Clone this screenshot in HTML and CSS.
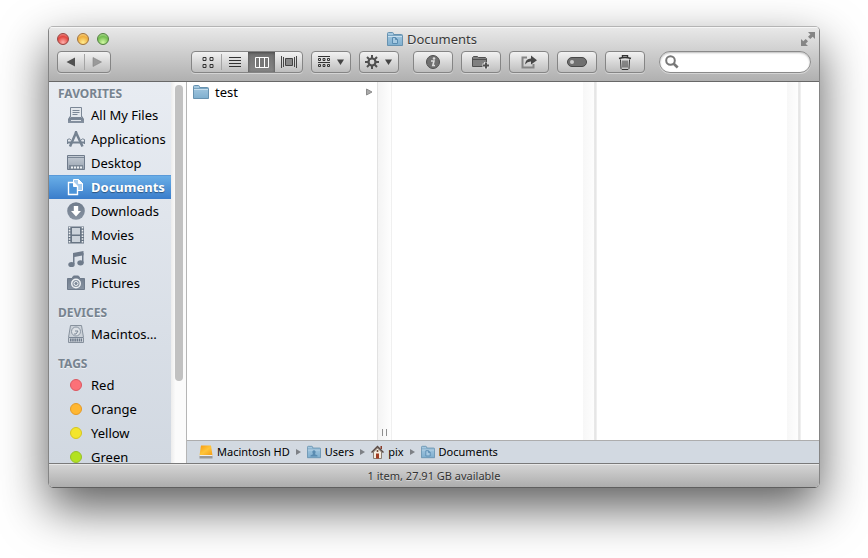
FILE: index.html
```html
<!DOCTYPE html>
<html lang="en">
<head>
<meta charset="utf-8">
<title>Documents</title>
<link rel="stylesheet" href="styles.css">
</head>
<body>
<svg class="defs" width="0" height="0" aria-hidden="true">
  <defs>
    <linearGradient id="folderFill" x1="0" y1="0" x2="0" y2="1"><stop offset="0" stop-color="#a9cbe2"/><stop offset="1" stop-color="#7fafcf"/></linearGradient>
    <linearGradient id="driveFill" x1="0" y1="0" x2="1" y2="1"><stop offset="0" stop-color="#f79a10"/><stop offset=".5" stop-color="#ffc53a"/><stop offset="1" stop-color="#f39a12"/></linearGradient>
    <linearGradient id="slate" x1="0" y1="0" x2="0" y2="1"><stop offset="0" stop-color="#6f7b8b"/><stop offset="1" stop-color="#8793a2"/></linearGradient>
    <linearGradient id="screen" x1="0" y1="0" x2="0" y2="1"><stop offset="0" stop-color="#c5ccd5"/><stop offset="1" stop-color="#98a3b0"/></linearGradient>
    <symbol id="folder" viewBox="0 0 16 16">
      <path d="M.5 14.500V2.500q0-1 1-1h4q.7 0 1 1v1h8q1 0 1 1v10z" fill="url(#folderFill)" stroke="#6792b0"/>
      <path d="M1 5.500h14" stroke="#c8dfee"/><path d="M1 4.500h14" stroke="#7aa5c2"/>
    </symbol>
    <symbol id="folder-doc" viewBox="0 0 16 16">
      <use href="#folder"/><path d="M5.500 6.500h3l2 2v4h-5zM8.500 6.500v2h2" fill="#a7cae2" stroke="#5a8cb1"/>
    </symbol>
    <symbol id="folder-user" viewBox="0 0 16 16">
      <use href="#folder"/><path d="M8 6a2 2 0 0 1 1.500 3.200L9.200 10.500l2.800 1.500v1H4v-1l2.800-1.500-.3-1.300A2 2 0 0 1 8 6z" fill="#5a8cb1"/>
    </symbol>
  </defs>
</svg>

<main class="window">
  <header class="chrome">
    <div class="titlebar">
      <div class="lights">
        <button class="light close" aria-label="Close"></button>
        <button class="light minimize" aria-label="Minimize"></button>
        <button class="light zoom" aria-label="Zoom"></button>
      </div>
      <h1 class="title"><svg width="16" height="16"><use href="#folder-doc"/></svg>Documents</h1>
      <button class="fullscreen" aria-label="Full screen"><svg width="14" height="14" viewBox="0 0 14 14" fill="#858585"><path d="M7 0h7v7l-2.300-2.300-2.400 2.300-2.300-2.300 2.400-2.300zM0 7l2.300 2.300L4.700 7 7 9.300l-2.400 2.400L7 14H0z"/></svg></button>
    </div>
    <div class="toolbar">
      <div class="group nav">
        <button aria-label="Back"><svg width="10" height="10"><path d="M9 .5v9L.5 5z" fill="#505050"/></svg></button>
        <button aria-label="Forward"><svg width="10" height="10"><path d="M1 .5v9L9.500 5z" fill="#9a9a9a" stroke="#858585" stroke-width=".6"/></svg></button>
      </div>
      <div class="group views">
        <button aria-label="Icons"><svg width="12" height="12" fill="none" stroke="#333"><path d="M1 1.500h3v3H1zM8 1.500h3v3H8zM1 8.500h3v3H1zM8 8.500h3v3H8z"/></svg></button>
        <button aria-label="List"><svg width="12" height="12" stroke="#333"><path d="M0 1.500h12M0 4.500h12M0 7.500h12M0 10.500h12"/></svg></button>
        <button class="on" aria-label="Columns" aria-pressed="true"><svg width="14" height="12" fill="#777" stroke="#fff"><path d="M.5 1.500h13v10H.5zM4.500 1v10M9.500 1v10"/></svg></button>
        <button aria-label="Cover Flow"><svg width="16" height="12" stroke="#444"><path d="M.5 0v12M2.500 1v10M13.500 1v10M15.500 0v12"/><path d="M4.500 2.500h7v7h-7z" fill="#888"/></svg></button>
      </div>
      <button class="tool" aria-label="Arrange"><svg width="28" height="14" viewBox="0 0 28 14" fill="none" stroke="#333"><path d="M1 1.500h12M1 7.500h12"/><path d="M1.500 3.500h2v2h-2zM6 3.500h2v2H6zM10.500 3.500h2v2h-2zM1.500 9.500h2v2h-2zM6 9.500h2v2H6zM10.500 9.500h2v2h-2z"/><path d="M20 4.500h7L23.500 10z" fill="#444" stroke="none"/></svg></button>
      <button class="tool" aria-label="Action"><svg width="28" height="14" viewBox="0 0 28 14"><g stroke="#505050" fill="none"><circle cx="7" cy="7" r="3.500" stroke-width="2.200"/><path d="M7 0v3M7 11v3M0 7h3M11 7h3M2 2l2.200 2.200M9.800 9.800 12 12M2 12l2.200-2.200M9.800 4.200 12 2" stroke-width="2"/></g><path d="M20 4.500h7L23.500 10z" fill="#444"/></svg></button>
      <button class="tool info" aria-label="Get Info"><svg width="14" height="14"><circle cx="7" cy="7" r="6.500" fill="#707070" stroke="#505050"/><circle cx="8" cy="3.500" r="1.300" fill="#ddd"/><path d="M5 6h3L6.800 10.500H9" fill="none" stroke="#ddd" stroke-width="1.600"/></svg></button>
      <button class="tool" aria-label="New Folder"><svg width="18" height="14"><path d="M.5 11.500v-9l1-1h4l1 1h7l1 1v8z" fill="#808080" stroke="#505050"/><path d="M1 4.500h13" stroke="#505050"/><path d="M14 7v7M10.500 10.500h7" stroke="#ddd" stroke-width="4"/><path d="M14 7.500v6M11 10.500h6" stroke="#505050" stroke-width="2"/></svg></button>
      <button class="tool" aria-label="Share"><svg width="16" height="14"><path d="M6 2.500H1.500v10h11V9" fill="none" stroke="#858585" stroke-width="2"/><path d="M4 9.500q.5-6 6-6V.5l6 4.700-6 4.300V6.500Q6.500 6.300 4 9.500z" fill="#484848"/></svg></button>
      <button class="tool" aria-label="Tags"><svg width="20" height="10"><rect x=".5" y=".5" width="19" height="9" rx="4.500" fill="#707070" stroke="#484848"/><circle cx="5" cy="5" r="2" fill="#ccc"/></svg></button>
      <button class="tool" aria-label="Trash"><svg width="14" height="15" fill="none" stroke="#333"><path d="M1 3.500q6-2 12 0M4.500 2V.5h5V2" stroke-width="1.400"/><path d="M2.500 4.500l.5 9 1 1h6l1-1 .5-9M5 5.500v7M7 5.500v7M9 5.500v7"/></svg></button>
      <label class="search"><svg width="14" height="14"><circle cx="5.500" cy="5.500" r="4.300" fill="none" stroke="#777" stroke-width="2"/><path d="M8.700 8.700l4 3.800" stroke="#777" stroke-width="2.600"/></svg><input type="search" aria-label="Search"></label>
    </div>
  </header>

  <div class="body">
    <nav class="sidebar">
      <div class="places">
        <h2>FAVORITES</h2>
        <ul>
          <li><a href="#"><svg width="18" height="18" viewBox="0 0 18 18"><path d="M3.500 11.500v-10h11v10z" fill="#e3e7ec" stroke="#7b8796"/><path d="M5.500 4.500h7M5.500 6.500h7M5.500 8.500h5" stroke="#7b8796"/><path d="M3 10 1 13v4h16v-4l-2-3v2H3z" fill="url(#slate)"/><path d="M4 14.500h10" stroke="#dfe4ea"/></svg>All My Files</a></li>
          <li><a href="#"><svg width="18" height="18" viewBox="0 0 18 18" fill="none" stroke="#758291"><path d="M9.500 1.500 3 16.500M8.500 1.500l7 15" stroke-width="2.500"/><path d="M1 12.500h16" stroke-width="2"/><path d="M.5 14V9.500q2-1.500 3.500.5M17.500 14V9.500q-2-1.500-3.500.5"/></svg>Applications</a></li>
          <li><a href="#"><svg width="18" height="18" viewBox="0 0 18 18"><path d="M.5 1.500h17v14H.5z" fill="url(#screen)" stroke="#6f7b8b"/><path d="M1 3.500h16" stroke="#7b8796"/><path d="M2 11h14v4H2z" fill="#7d8997"/><path d="M4 13.500h2M7 13.500h2M10 13.500h2M13 13.500h2" stroke="#eef1f4" stroke-width="2"/></svg>Desktop</a></li>
          <li><a href="#" class="selected" aria-current="page"><svg width="18" height="18" viewBox="0 0 18 18" stroke="#fff"><path d="M6.500 12.500v-11h5l4 4v7z" fill="#a7ccee"/><path d="M11.500 1.500v4h4" fill="#fff"/><path d="M1.500 16.500v-12h5l4 4v8z" fill="#4b93d8" stroke-width="1.400"/><path d="M6.500 4.500v4h4" fill="#fff"/></svg>Documents</a></li>
          <li><a href="#"><svg width="18" height="18" viewBox="0 0 18 18"><circle cx="9" cy="9" r="8.800" fill="url(#slate)"/><path d="M6.800 4h4.400v5H14l-5 5.500L4 9h2.800z" fill="#fff"/></svg>Downloads</a></li>
          <li><a href="#"><svg width="18" height="18" viewBox="0 0 18 18"><path d="M1 .5h16v17H1z" fill="#687584"/><path d="M5 2h8v6.500H5zM5 10h8v6H5z" fill="#ccd3db"/><path d="M2.500 1v16M15.500 1v16" stroke="#eef1f4" stroke-width="1.600" stroke-dasharray="1.600 1.200"/></svg>Movies</a></li>
          <li><a href="#"><svg width="18" height="18" viewBox="0 0 18 18" fill="#6f7b8b"><path d="M6 3 16.500 1v4.200L7.500 7v7H6z"/><path d="M15 3h1.500v10H15z"/><ellipse cx="4.500" cy="14.500" rx="3.200" ry="2.600"/><ellipse cx="13.500" cy="12.800" rx="3.200" ry="2.600"/></svg>Music</a></li>
          <li><a href="#"><svg width="18" height="18" viewBox="0 0 18 18"><path d="M.5 4.500H5L6.500 2h5L13 4.500h4.500v11H.5z" fill="url(#slate)" stroke="#6f7b8b"/><circle cx="9" cy="9.500" r="4.300" fill="#8b96a3" stroke="#eef1f4" stroke-width="1.400"/><circle cx="9" cy="9.500" r="2" fill="#7b8796" stroke="#eef1f4"/></svg>Pictures</a></li>
        </ul>
        <h2>DEVICES</h2>
        <ul>
          <li><a href="#"><svg width="18" height="18" viewBox="0 0 18 18"><path d="M3.500.5h11l2 12v5h-15v-5z" fill="#ccd2d9" stroke="#87919d"/><circle cx="9" cy="6.500" r="4.500" fill="#dde1e6" stroke="#8b96a3"/><path d="M8 6h3l-2 3H7M2 12.500h14" fill="none" stroke="#7b8796"/><path d="M3 15h12" stroke="#6f7b8b" stroke-width="3" stroke-dasharray="1.500 .7"/></svg>Macintos…</a></li>
        </ul>
        <h2>TAGS</h2>
        <ul>
          <li><a href="#"><i class="dot red"></i>Red</a></li>
          <li><a href="#"><i class="dot orange"></i>Orange</a></li>
          <li><a href="#"><i class="dot yellow"></i>Yellow</a></li>
          <li><a href="#"><i class="dot green"></i>Green</a></li>
        </ul>
      </div>
      <div class="scroller"><div class="thumb"></div></div>
    </nav>

    <section class="content">
      <div class="columns">
        <div class="column">
          <a href="#" class="file"><svg width="16" height="16"><use href="#folder"/></svg><span>test</span><svg width="7" height="8"><path d="M.5 1v6l5.500-3z" fill="#aaa" stroke="#8c8c8c"/></svg></a>
        </div>
        <div class="gutter first"><span class="grip"></span></div>
        <div class="column"></div>
        <div class="gutter"></div>
        <div class="column"></div>
        <div class="gutter"></div>
        <div class="rest"></div>
      </div>
      <nav class="path" aria-label="Path">
        <a href="#"><svg width="14" height="14"><path d="M2 .5h10l1.500 10H.5z" fill="url(#driveFill)"/><path d="M.5 10.500h13v3H.5z" fill="#999"/><path d="M.5 10.500h13" stroke="#eee"/></svg>Macintosh HD</a>
        <svg class="sep" width="5" height="6"><path d="M0 0v6l5-3z"/></svg>
        <a href="#"><svg width="14" height="14"><use href="#folder-user"/></svg>Users</a>
        <svg class="sep" width="5" height="6"><path d="M0 0v6l5-3z"/></svg>
        <a href="#"><svg width="13" height="14"><path d="M2.500 7v6.500h8V7l-4-4z" fill="#f4ede0" stroke="#8b7f74"/><path d="M.5 7.500l6-6 6 6" fill="none" stroke="#5b4a43" stroke-width="1.500"/><path d="M9.500 1h1.500v3H9.500z" fill="#8a3a28"/><path d="M5 8.500h3v5H5z" fill="#a13c22"/><circle cx="6.500" cy="6" r="1" fill="#69442f"/></svg>pix</a>
        <svg class="sep" width="5" height="6"><path d="M0 0v6l5-3z"/></svg>
        <a href="#"><svg width="14" height="14"><use href="#folder-doc"/></svg>Documents</a>
      </nav>
    </section>
  </div>
  <footer class="status">1 item, 27.91 GB available</footer>
</main>
</body>
</html>
```
FILE: styles.css
```css
* { box-sizing: border-box; }
body {
  margin: 0;
  height: 100vh;
  padding: 26px 48px 70px;
  display: flex;
  background: #fff;
  font: 13px/24px "Lucida Grande", "Noto Sans", sans-serif;
  color: #000;
  overflow: hidden;
}
.defs { position: absolute; }
svg { display: block; flex: none; }
a { color: inherit; text-decoration: none; }
button { border: 0; padding: 0; background: none; font: inherit; display: flex; align-items: center; justify-content: center; }
h1, h2, ul { margin: 0; padding: 0; font-weight: normal; list-style: none; }

.window {
  flex: 1;
  min-width: 0;
  display: flex;
  flex-direction: column;
  border: 1px solid #858585;
  border-top-color: #b4b4b4;
  border-bottom-color: #5f5f5f;
  border-radius: 5px;
  overflow: hidden;
  box-shadow: 0 20px 48px rgba(0, 0, 0, .64);
}

.chrome {
  height: 55px;
  flex: none;
  background: linear-gradient(#e9e9e9, #b0b0b0);
  border-bottom: 1px solid #686868;
  box-shadow: inset 0 1px #f6f6f6;
}
.titlebar { height: 22px; display: grid; grid-template-columns: 1fr auto 1fr; align-items: center; padding: 0 4px; }
.lights { display: flex; gap: 8px; padding-left: 4px; }
.light { width: 12px; height: 12px; border-radius: 50%; border: 1px solid; }
.close { background: radial-gradient(circle at 50% 85%, #ffb0ac, #e2463f 60%, #f0a5a3); border-color: #97423f; }
.minimize { background: radial-gradient(circle at 50% 85%, #ffec91, #eeae3e 60%, #f8dca0); border-color: #a0713a; }
.zoom { background: radial-gradient(circle at 50% 85%, #d2f9a5, #74bd50 60%, #c1e6aa); border-color: #527f3f; }
.title { display: flex; gap: 4px; align-items: center; padding-right: 4px; font-size: 13px; color: #3a3a3a; text-shadow: 0 1px rgba(255, 255, 255, .5); }
.fullscreen { justify-self: end; }

.toolbar { display: flex; gap: 8px; padding: 2px 8px 0; }
.group, .tool {
  height: 22px;
  border: 1px solid #858585;
  border-radius: 4px;
  background: linear-gradient(#f2f2f2, #bebebe);
  box-shadow: 0 1px rgba(255, 255, 255, .4);
}
.group { display: flex; overflow: hidden; }
.group button { flex: 1; }
.group button + button { background: linear-gradient(#a4a4a4, #a4a4a4) left center / 1px 16px no-repeat; }
.nav { width: 54px; margin-right: auto; }
.views { width: 112px; }
.views button:first-child { padding-left: 2px; }
.views .on + button { background: none; }
.views button.on { background: linear-gradient(#707070, #858585); box-shadow: inset 0 1px 3px #4a4a4a; }
.tool { width: 40px; }
.info { margin-left: 6px; }
.search {
  width: 152px;
  height: 22px;
  margin-left: 6px;
  display: flex;
  align-items: center;
  gap: 4px;
  padding: 0 5px;
  border: 1px solid #8a8a8a;
  border-radius: 11px;
  background: #fff;
  box-shadow: inset 0 1px 2px #bbb, 0 1px rgba(255, 255, 255, .4);
}
.search input { flex: 1; min-width: 0; border: 0; padding: 0; background: none; outline: none; font: inherit; line-height: 16px; }

.body { flex: 1; min-height: 0; display: flex; background: #fff; }
.sidebar { width: 138px; flex: none; display: flex; border-right: 1px solid #b5b5b5; overflow: hidden; }
.places { flex: 1; min-width: 0; background: linear-gradient(#e8ecf2, #d1d8e1); }
.places h2 { font-size: 12px; font-weight: bold; line-height: 16px; color: #77838f; padding: 4px 9px 1px; text-shadow: 0 1px rgba(255, 255, 255, .6); }
.places ul + h2 { padding-top: 10px; }
.places a { height: 24px; display: flex; align-items: center; gap: 6px; padding-left: 18px; white-space: nowrap; }
.places .selected { background: linear-gradient(#6bb0e8, #3a7dcb); box-shadow: inset 0 1px #5a9ad9; color: #fff; font-weight: bold; text-shadow: 0 1px 1px rgba(0, 0, 0, .4); }
.dot { width: 12px; height: 12px; margin: 0 3px; border-radius: 50%; border: 1px solid; }
.red { background: #fc7178; border-color: #dc5861; }
.orange { background: #ffb732; border-color: #e59a26; }
.yellow { background: #f3e52e; border-color: #d5c521; }
.green { background: #b3e221; border-color: #97c02b; }
.scroller { width: 15px; flex: none; padding: 3px; background: linear-gradient(90deg, #ececec, #fbfbfb 30%); }
.thumb { width: 8px; height: 79%; margin-left: 1px; border-radius: 4px; background: #c1c1c1; }

.content { flex: 1; min-width: 0; display: flex; flex-direction: column; }
.columns { flex: 1; min-height: 0; display: flex; }
.column { flex: 190 1 0; min-width: 0; }
.file { display: flex; align-items: center; gap: 6px; height: 20px; padding: 0 4px 0 6px; }
.file span { flex: 1; }
.gutter { width: 14px; flex: none; background: linear-gradient(90deg, #f7f7f7, #fdfdfd 75%, #e0e0e0 85%, #f4f4f4); }
.first { width: 15px; display: flex; align-items: flex-end; justify-content: center; padding-bottom: 4px; border-left: 1px solid #e2e2e2; border-right: 1px solid #f0f0f0; background: linear-gradient(90deg, #f4f4f4, #fefefe); }
.grip { width: 5px; height: 7px; border: solid #8f8f8f; border-width: 0 1px; }
.rest { width: 18px; flex: none; }
.path { height: 23px; flex: none; display: flex; align-items: center; gap: 6px; padding-left: 12px; background: #d2d9e1; border-top: 1px solid #adadad; font-size: 11px; line-height: 16px; }
.path a { display: flex; align-items: center; gap: 4px; }
.sep { fill: #7d8186; }
.status { height: 24px; flex: none; border-top: 1px solid #7a7a7a; background: linear-gradient(#d5d5d5, #adadad); box-shadow: inset 0 1px #e8e8e8; text-align: center; font-size: 11px; line-height: 23px; color: #333; text-shadow: 0 1px rgba(255, 255, 255, .4); }
```
